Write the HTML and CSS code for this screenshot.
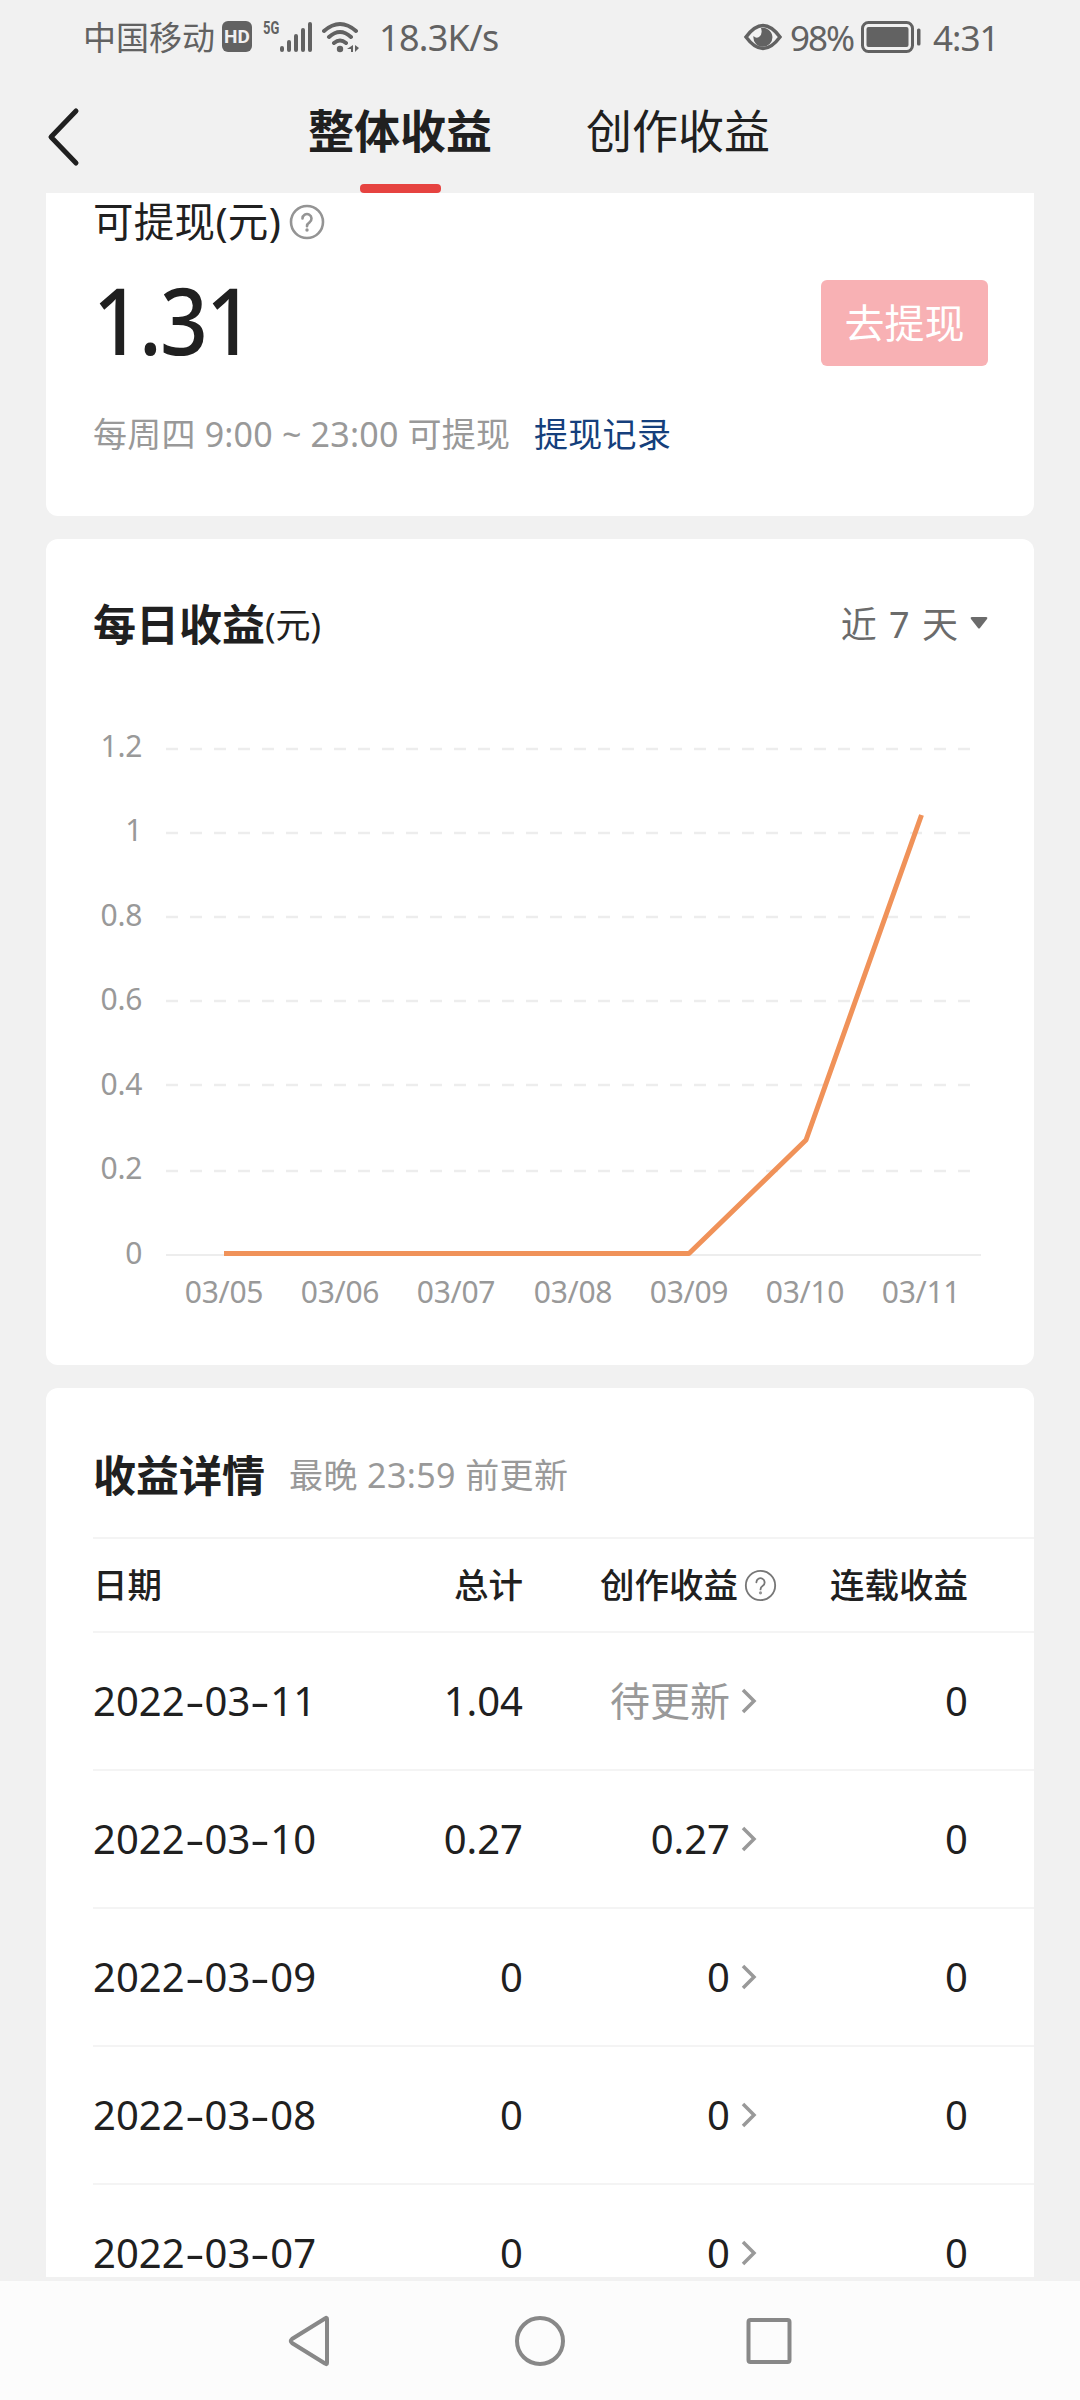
FILE: index.html
```html
<!DOCTYPE html>
<html lang="zh-CN">
<head>
  <meta charset="UTF-8" />
  <meta name="viewport" content="width=device-width, initial-scale=1.0" />
  <title>整体收益</title>
  <link rel="stylesheet" href="styles.css">
</head>
<body>
  <div class="status">
    <span class="carrier">中国移动</span>
    <span class="hd">HD</span>
    <span class="net">5G</span>
    <svg class="signal" width="32" height="30" viewBox="0 0 32 30">
      <path d="M2 26v2M9 20v8M16 14v14M23 8v20M30 2v26" />
    </svg>
    <svg class="wifi" width="38" height="32" viewBox="0 0 38 32">
      <path d="M2 10Q18 -4 34 10M7 16Q18 6 29 16M12 22Q18 17 24 22" />
      <circle cx="18" cy="28" r="3.2" />
      <path class="fill" d="M31 24v7h-2v-3h-4zM33 24v7l4-4z" />
    </svg>
    <span class="speed">18.3K/s</span>
    <svg class="eye" width="40" height="28" viewBox="0 0 40 28">
      <path d="M3 14Q20 -9 37 14Q20 37 3 14z" />
      <path class="fill" d="M18 5A9.5 9.5 0 1 1 10.500 13Q13 16 16 14Q20 11 18 5z" />
    </svg>
    <span class="percent">98%</span>
    <svg class="battery" width="60" height="32" viewBox="0 0 60 32">
      <rect class="frame" x="1.500" y="1.500" width="50" height="29" rx="6" />
      <rect x="5.500" y="6" width="42" height="20" rx="2" />
      <rect x="56" y="7.500" width="3.500" height="17" rx="1.500" />
    </svg>
    <span class="time">4:31</span>
  </div>

  <div class="header">
    <svg class="back" width="34" height="60" viewBox="0 0 34 60">
      <path d="M30 4L5 30l25 26" />
    </svg>
    <div class="tab active">整体收益</div>
    <div class="tab">创作收益</div>
  </div>

  <main>
    <section class="card balance">
      <div class="balance-title">可提现(元)
        <svg class="help" width="36" height="36" viewBox="0 0 36 36">
          <circle cx="18" cy="18" r="16" />
          <path d="M13.500 14.500a4.500 4.500 0 1 1 7 3.800q-2.500 1.600-2.500 4" />
          <circle class="dot" cx="18" cy="26" r="1.700" />
        </svg>
      </div>
      <div class="balance-row">
        <span class="amount">1.31</span>
        <button class="withdraw">去提现</button>
      </div>
      <div class="balance-note"><span class="when">每周四 9:00 ~ 23:00 可提现</span><a class="record">提现记录</a></div>
    </section>

    <section class="card daily">
      <div class="daily-head">
        <h2>每日收益<small>(元)</small></h2>
        <div class="range">近 7 天
          <svg width="18" height="14" viewBox="0 0 18 14"><path d="M2 1h14q2 0 1 2l-7 9q-1 1-2 0L1 3q-1-2 1-2z" /></svg>
        </div>
      </div>
      <svg class="chart" width="988" height="620" viewBox="46 700 988 620">
        <g class="grid">
          <path d="M166 749H972M166 833H972M166 917H972M166 1001H972M166 1085H972M166 1171H972" />
        </g>
        <path class="base" d="M166 1255H981" />
        <g class="y-axis">
          <text x="142" y="757">1.2</text>
          <text x="142" y="841">1</text>
          <text x="142" y="926">0.8</text>
          <text x="142" y="1010">0.6</text>
          <text x="142" y="1095">0.4</text>
          <text x="142" y="1179">0.2</text>
          <text x="142" y="1264">0</text>
        </g>
        <g class="x-axis">
          <text x="224" y="1303">03/05</text>
          <text x="340" y="1303">03/06</text>
          <text x="456" y="1303">03/07</text>
          <text x="573" y="1303">03/08</text>
          <text x="689" y="1303">03/09</text>
          <text x="805" y="1303">03/10</text>
          <text x="921" y="1303">03/11</text>
        </g>
        <polyline class="line" points="224,1253.500 689,1253.500 806,1140 921.500,815" />
      </svg>
    </section>

    <section class="card detail">
      <div class="detail-head">
        <h2>收益详情</h2>
        <span>最晚 23:59 前更新</span>
      </div>
      <div class="row row-head">
        <span>日期</span>
        <span>总计</span>
        <span>创作收益
          <svg class="help" width="33" height="33" viewBox="0 0 36 36">
            <circle cx="18" cy="18" r="16" />
            <path d="M13.500 14.500a4.500 4.500 0 1 1 7 3.800q-2.500 1.600-2.500 4" />
            <circle class="dot" cx="18" cy="26" r="1.700" />
          </svg>
        </span>
        <span>连载收益</span>
      </div>
      <div class="row">
        <span class="date">2022<i>-</i>03<i>-</i>11</span>
        <span>1.04</span>
        <span class="link"><em>待更新</em><svg class="more" width="16" height="28" viewBox="0 0 16 28"><path d="M2 3l11 11L2 25" /></svg></span>
        <span>0</span>
      </div>
      <div class="row">
        <span class="date">2022<i>-</i>03<i>-</i>10</span>
        <span>0.27</span>
        <span class="link">0.27<svg class="more" width="16" height="28" viewBox="0 0 16 28"><path d="M2 3l11 11L2 25" /></svg></span>
        <span>0</span>
      </div>
      <div class="row">
        <span class="date">2022<i>-</i>03<i>-</i>09</span>
        <span>0</span>
        <span class="link">0<svg class="more" width="16" height="28" viewBox="0 0 16 28"><path d="M2 3l11 11L2 25" /></svg></span>
        <span>0</span>
      </div>
      <div class="row">
        <span class="date">2022<i>-</i>03<i>-</i>08</span>
        <span>0</span>
        <span class="link">0<svg class="more" width="16" height="28" viewBox="0 0 16 28"><path d="M2 3l11 11L2 25" /></svg></span>
        <span>0</span>
      </div>
      <div class="row">
        <span class="date">2022<i>-</i>03<i>-</i>07</span>
        <span>0</span>
        <span class="link">0<svg class="more" width="16" height="28" viewBox="0 0 16 28"><path d="M2 3l11 11L2 25" /></svg></span>
        <span>0</span>
      </div>
    </section>
  </main>

  <nav class="sysbar">
    <svg width="50" height="54" viewBox="0 0 50 54"><path d="M41 5v44q0 2-2 .5L6 29q-2.500-2 0-4L39 4.500q2-1.500 2 .5z" /></svg>
    <svg width="50" height="54" viewBox="0 0 50 54"><circle cx="25" cy="27" r="23" /></svg>
    <svg width="50" height="54" viewBox="0 0 50 54"><rect x="4.500" y="6" width="41" height="42" rx="2" /></svg>
  </nav>
</body>
</html>
```
FILE: styles.css
```css
* { box-sizing: border-box; }
body { margin: 0; width: 1080px; height: 2400px; overflow: hidden; display: flex; flex-direction: column; background: #f1f1f1; color: #202020; font-family: "Noto Sans", "Noto Sans CJK SC", sans-serif; }
svg { display: block; flex: none; fill: none; }
h2 { margin: 0; font-size: 43px; font-weight: 700; }

/* status bar */
.status { height: 76px; flex: none; display: flex; align-items: center; padding-left: 83px; color: #626262; white-space: nowrap; line-height: 40px; }
.status span { flex: none; }
.carrier { width: 139px; font-size: 33px; }
.hd { width: 30px; height: 31px; margin-top: -3px; border-radius: 6px; background: #626262; color: #f1f1f1; font: bold 19px/31px "Roboto", sans-serif; text-align: center; }
.net { width: 17px; margin: -20px 0 0 11px; font: bold 18px/18px "Roboto", sans-serif; transform: scaleX(.72); transform-origin: left; }
.signal { margin-top: -3px; stroke: #626262; stroke-width: 4; stroke-linecap: round; }
.wifi { margin: -3px 0 0 10px; stroke: #626262; stroke-width: 4; stroke-linecap: round; }
.wifi circle, .wifi .fill { fill: #626262; stroke: none; }
.speed { width: 123px; margin-left: 19px; font-size: 36px; letter-spacing: -.7px; }
.eye { margin: -3px 0 0 241px; stroke: #626262; stroke-width: 3.500; }
.eye .fill { fill: #626262; stroke: none; }
.percent { width: 71px; margin-left: 7px; font-size: 35px; letter-spacing: -2px; }
.battery { margin-top: -3px; fill: #626262; }
.battery .frame { fill: none; stroke: #626262; stroke-width: 3; }
.time { margin-left: 12px; font-size: 35px; letter-spacing: -1px; }

/* tabs */
.header { height: 117px; flex: none; display: flex; padding-left: 46px; }
.back { margin-top: 31px; stroke: #202020; stroke-width: 5; stroke-linecap: round; stroke-linejoin: round; }
.tab { width: 184px; margin-left: 94px; padding-top: 24px; font-size: 46px; line-height: 60px; display: flex; flex-direction: column; align-items: center; white-space: nowrap; }
.tab.active { margin-left: 228px; font-weight: 700; }
.tab.active::after { content: ""; width: 81px; height: 9px; margin-top: 24px; border-radius: 4px; background: #e64340; }

main { height: 2084px; flex: none; padding: 0 46px; display: flex; flex-direction: column; gap: 23px; }
.card { flex: none; background: #fff; border-radius: 12px; }

.balance { height: 323px; border-radius: 0 0 12px 12px; padding: 0 46px 0 47px; }
.balance-title { display: flex; align-items: center; gap: 8px; height: 58px; font-size: 40.500px; line-height: 58px; letter-spacing: .3px; }
.help { stroke: #949494; stroke-width: 2.600; stroke-linecap: round; }
.help .dot { fill: #949494; stroke: none; }
.balance-row { display: flex; align-items: center; justify-content: space-between; height: 138px; }
.amount { font-size: 92px; line-height: 120px; font-weight: 500; letter-spacing: -2px; transform: scaleX(.91); transform-origin: left; }
.withdraw { width: 167px; height: 86px; padding: 0; margin-top: 6px; border: none; border-radius: 6px; background: #f8b1b4; color: #fff; font-family: inherit; font-size: 40px; line-height: 86px; }
.balance-note { display: flex; gap: 24px; font-size: 34px; line-height: 90px; white-space: nowrap; }
.when { width: 417px; color: #999; letter-spacing: .2px; }
.record { color: #153f7c; letter-spacing: .3px; }

.daily { height: 826px; }
.daily-head { display: flex; justify-content: space-between; align-items: center; height: 161px; padding: 6px 46px 0 47px; }
.daily-head small { font-size: 35px; font-weight: 400; vertical-align: 3px; }
.range { display: flex; align-items: center; gap: 12px; color: #6b6b6b; font-size: 36px; word-spacing: 3px; }
.range svg { fill: #6b6b6b; }
.grid { stroke: #ededed; stroke-width: 2.500; stroke-dasharray: 12 12; }
.base { stroke: #ededed; stroke-width: 2; }
.chart text { fill: #999; font-size: 30px; letter-spacing: -.3px; }
.y-axis { text-anchor: end; }
.x-axis { text-anchor: middle; }
.line { stroke: #f09259; stroke-width: 5; stroke-linejoin: round; }

/* the list runs on under the system bar */
.detail { height: 889px; padding-left: 47px; border-radius: 12px 12px 0 0; }
.detail-head { display: flex; align-items: center; gap: 24px; height: 149px; padding-top: 22px; }
.detail-head span { color: #999; font-size: 34px; letter-spacing: .4px; }
.row { display: grid; grid-template-columns: 229px 201px 254px 191px; align-items: center; height: 138px; border-top: 2px solid #f4f4f4; font-size: 40px; white-space: nowrap; }
.row > span { display: flex; align-items: center; justify-content: flex-end; line-height: 60px; }
.row > span:first-child { justify-content: flex-start; }
.row-head { height: 94px; font-size: 34.500px; font-weight: 500; }
.row-head .help { margin-left: 6px; stroke: #777; stroke-width: 2; }
.row i { width: 20px; font-style: normal; text-align: center; transform: scaleX(1.500); }
.link { padding-right: 20px; }
.link em { font-style: normal; color: #999; }
.more { margin-left: 11px; stroke: #999; stroke-width: 3.500; }

.sysbar { flex: 1; margin-top: 4px; display: flex; justify-content: center; gap: 179px; padding-top: 33px; background: #fcfcfc; }
.sysbar svg { stroke: #888; stroke-width: 4; }
```
